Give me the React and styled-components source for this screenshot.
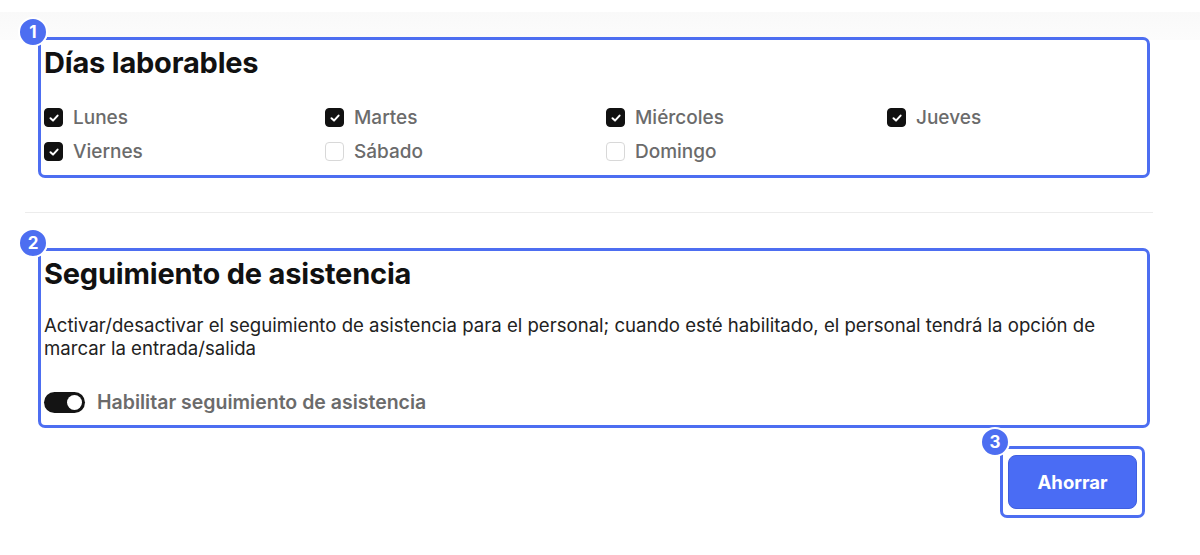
import React, { useState } from "react";
import styled, { createGlobalStyle } from "styled-components";

const Global = createGlobalStyle`
  html, body { margin: 0; padding: 0; background: #ffffff; }
  body { font-family: Inter, "Noto Sans", "Liberation Sans", sans-serif; color: #111; }
  * { box-sizing: border-box; }
`;

const BLUE = "#4d6ef1";

const Page = styled.div`
  width: 1200px;
  height: 555px;
  position: relative;
  background: #fff;
`;

const TopBand = styled.div`
  height: 28px;
  margin-top: 12px;
  background: linear-gradient(#f9f9f9, #fcfcfc);
`;

const Content = styled.div`
  margin-top: -3px;
  padding: 0 50px 0 38px;
  display: flex;
  flex-direction: column;
`;

const Highlight = styled.section`
  position: relative;
  border: 3px solid ${BLUE};
  border-radius: 7px;
  padding: ${(p) => p.$pad || "4px 5px"};
  background: #fff;
`;

const Badge = styled.span`
  position: absolute;
  left: ${(p) => p.$left || "-23px"};
  top: ${(p) => p.$top || "-23px"};
  width: 30px;
  height: 30px;
  border-radius: 50%;
  background: ${BLUE};
  border: 2px solid #fff;
  color: #fff;
  font-size: 17px;
  font-weight: 700;
  display: flex;
  align-items: center;
  justify-content: center;
  line-height: 1;
`;

const Title = styled.h2`
  margin: 0;
  font-size: 29px;
  font-weight: 700;
  letter-spacing: -0.2px;
  line-height: 38px;
  color: #111;
`;

const DaysGrid = styled.div`
  display: grid;
  grid-template-columns: repeat(4, 281px);
  row-gap: 9px;
  margin-top: 23px;
  margin-bottom: 8px;
`;

const DayItem = styled.label`
  display: flex;
  align-items: center;
  gap: 10px;
  height: 25px;
  font-size: 19px;
  font-weight: 500;
  color: #6b6b6b;
`;

const Box = styled.span`
  width: 19px;
  height: 19px;
  border-radius: 4px;
  background: ${(p) => (p.$on ? "#111" : "#fff")};
  border: 1.5px solid ${(p) => (p.$on ? "#111" : "#d8d8d8")};
  display: flex;
  align-items: center;
  justify-content: center;
  flex-shrink: 0;
`;

const Divider = styled.hr`
  border: none;
  height: 1px;
  background: #ececec;
  margin: 34px -3px 35px -13px;
`;

const Paragraph = styled.p`
  margin: 21px 0 0;
  font-size: 18.6px;
  line-height: 23px;
  color: #222;
  font-weight: 400;
`;

const ToggleRow = styled.div`
  display: flex;
  align-items: center;
  gap: 12px;
  margin-top: 30px;
  margin-bottom: 8px;
`;

const Track = styled.span`
  width: 41px;
  height: 21px;
  border-radius: 11px;
  background: #141414;
  position: relative;
  flex-shrink: 0;
`;

const Knob = styled.span`
  position: absolute;
  right: 3px;
  top: 3px;
  width: 15px;
  height: 15px;
  border-radius: 50%;
  background: #fff;
`;

const ToggleLabel = styled.span`
  font-size: 19.5px;
  font-weight: 600;
  color: #6b6b6b;
`;

const Footer = styled.div`
  display: flex;
  justify-content: flex-end;
  padding-right: 5px;
  margin-top: 18px;
`;

const SaveButton = styled.button`
  display: block;
  width: 129px;
  height: 54px;
  border-radius: 8px;
  border: 1px solid #3f5fe0;
  background: #4a6cf4;
  color: #fff;
  font-family: inherit;
  font-size: 18.5px;
  font-weight: 700;
  cursor: pointer;
`;

const Check = () => (
  <svg width="12" height="12" viewBox="0 0 12 12">
    <path d="M2.5 6.3 L5 8.6 L9.6 3.6" fill="none" stroke="#fff" strokeWidth="2" strokeLinecap="round" strokeLinejoin="round" />
  </svg>
);

const days = [
  ["Lunes", true],
  ["Martes", true],
  ["Miércoles", true],
  ["Jueves", true],
  ["Viernes", true],
  ["Sábado", false],
  ["Domingo", false],
];

export default function App() {
  const [state] = useState(days);
  return (
    <Page>
      <Global />
      <TopBand />
      <Content>
        <Highlight $pad="4px 4px 3px 3px">
          <Badge>1</Badge>
          <Title>Días laborables</Title>
          <DaysGrid>
            {state.map(([name, on]) => (
              <DayItem key={name}>
                <Box $on={on}>{on && <Check />}</Box>
                {name}
              </DayItem>
            ))}
          </DaysGrid>
        </Highlight>
        <Divider />
        <Highlight $pad="4px 4px 3px 3px">
          <Badge>2</Badge>
          <Title>Seguimiento de asistencia</Title>
          <Paragraph>
            Activar/desactivar el seguimiento de asistencia para el personal; cuando esté habilitado, el personal tendrá la opción de marcar la entrada/salida
          </Paragraph>
          <ToggleRow>
            <Track>
              <Knob />
            </Track>
            <ToggleLabel>Habilitar seguimiento de asistencia</ToggleLabel>
          </ToggleRow>
        </Highlight>
        <Footer>
          <Highlight $pad="6px 5px 6px">
            <Badge $left="-23px" $top="-22px">3</Badge>
            <SaveButton>Ahorrar</SaveButton>
          </Highlight>
        </Footer>
      </Content>
    </Page>
  );
}
